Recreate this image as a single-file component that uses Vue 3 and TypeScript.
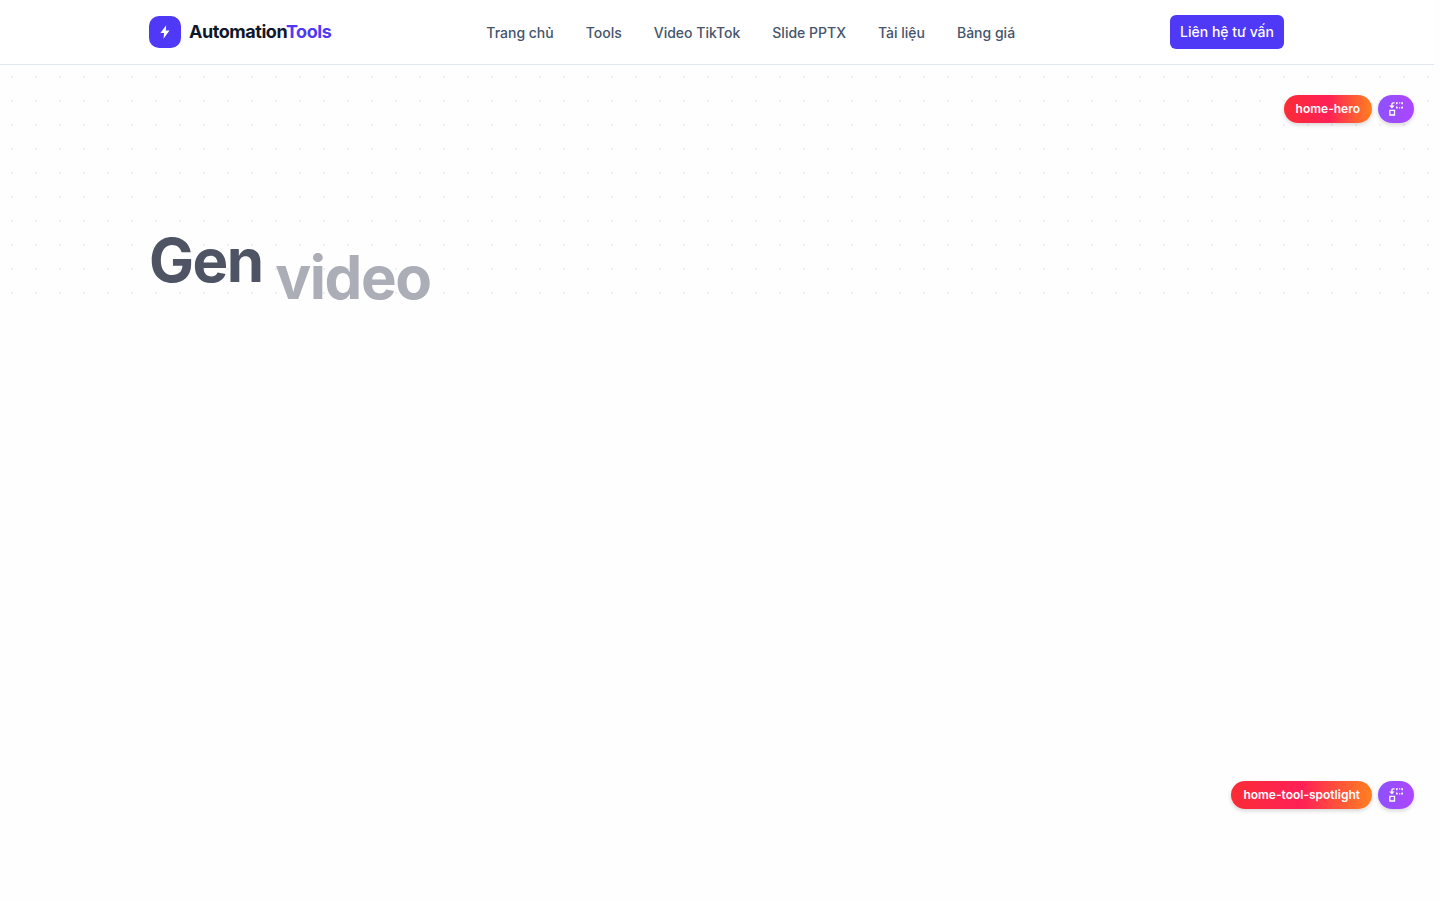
<script setup lang="ts">
interface NavLink {
  label: string
  href: string
}

const links: NavLink[] = [
  { label: 'Trang chủ', href: '#home' },
  { label: 'Tools', href: '#tools' },
  { label: 'Video TikTok', href: '#video' },
  { label: 'Slide PPTX', href: '#slide' },
  { label: 'Tài liệu', href: '#docs' },
  { label: 'Bảng giá', href: '#pricing' },
]

const sections: { id: string; hero: boolean }[] = [
  { id: 'home-hero', hero: true },
  { id: 'home-tool-spotlight', hero: false },
]
</script>

<template>
  <div class="page">
    <header class="header">
      <div class="container bar">
        <a class="brand" href="#home">
          <span class="logo">
            <svg viewBox="0 0 16 16" width="16" height="16" aria-hidden="true">
              <path d="M9.2 1.2 3.4 9.1h3.7L6.5 14.8l6-8.2H8.8z" fill="#fff" />
            </svg>
          </span>
          <span class="brand-name">Automation<span class="accent">Tools</span></span>
        </a>
        <nav class="nav">
          <a v-for="link in links" :key="link.label" :href="link.href">{{ link.label }}</a>
        </nav>
        <button class="cta" type="button">Liên hệ tư vấn</button>
      </div>
    </header>
    <main>
      <section v-for="section in sections" :key="section.id" :class="section.hero ? 'hero' : 'spotlight'">
        <div v-if="section.hero" class="dots"></div>
        <div v-if="section.hero" class="container">
          <h1 class="title"><span class="word">Gen</span> <span class="word entering">video</span></h1>
        </div>
        <div class="tools">
          <button class="tag" type="button">{{ section.id }}</button>
          <button class="swap" type="button" aria-label="Replace section">
            <svg viewBox="0 0 16 16" width="16" height="16" fill="none" stroke="#fff" stroke-width="1.3" aria-hidden="true">
              <path d="M1.9 9.4h4.6v4.6H1.9z" />
              <path d="M6.6 1.9H5.3a1.4 1.4 0 0 0-1.4 1.4v1.6" />
              <path d="M1.2 4.6h5.4L3.9 7.5z" fill="#fff" stroke="none" />
              <path d="M8.7 3.3V1.9h1.1M11 1.9h1.2M13.1 1.9h1.2v1.4M8.7 5.5v1.3h1.1M11 6.8h1.2M13.1 6.8h1.2V5.5" />
            </svg>
          </button>
        </div>
      </section>
    </main>
  </div>
</template>

<style>
body {
  margin: 0;
  background: #fefefe;
}
</style>

<style scoped>
.page {
  min-height: 100vh;
  padding-right: 6px;
  box-sizing: border-box;
  font-family: Inter, "Noto Sans", sans-serif;
  color: #0f172b;
}

.container {
  max-width: 1184px;
  margin: 0 auto;
  padding: 0 25px 0 24px;
  box-sizing: border-box;
}

.header {
  background: #fff;
  border-bottom: 1px solid #e2e8f0;
}

.bar {
  height: 64px;
  display: flex;
  align-items: center;
  justify-content: space-between;
}

.brand {
  display: flex;
  align-items: center;
  gap: 8px;
  color: inherit;
  text-decoration: none;
}

.logo {
  width: 32px;
  height: 32px;
  border-radius: 10px;
  background: #4f39f6;
  display: grid;
  place-items: center;
}

.brand-name {
  font-size: 18px;
  line-height: 28px;
  font-weight: 700;
  letter-spacing: -0.025em;
}

.accent {
  color: #4f39f6;
}

.nav {
  display: flex;
  gap: 32px;
  padding-top: 2px;
}

.nav a {
  color: #45556c;
  font-size: 14px;
  line-height: 20px;
  font-weight: 500;
  text-decoration: none;
}

.cta {
  height: 34px;
  border: 0;
  border-radius: 6px;
  padding: 0 10px;
  background: #4f39f6;
  color: #fff;
  font: 500 14px/20px Inter, "Noto Sans", sans-serif;
}

.hero,
.spotlight {
  position: relative;
}

.hero {
  min-height: 686px;
}

.hero > .container {
  padding-top: 159px;
}

.dots {
  position: absolute;
  inset: 0 -6px auto 0;
  height: 240px;
  background-image: radial-gradient(circle, #efefef 1px, transparent 1px);
  background-size: 24px 24px;
}

.title {
  position: relative;
  margin: 0;
  font-size: 60px;
  line-height: 72px;
  font-weight: 700;
  letter-spacing: -0.025em;
}

.word {
  display: inline-block;
  color: #4f5465;
}

.entering {
  padding-top: 17px;
  vertical-align: top;
  color: #abaeb6;
}

.tools {
  position: absolute;
  top: 30px;
  right: 20px;
  display: flex;
  gap: 6px;
}

.tag,
.swap {
  height: 28px;
  border: 0;
  border-radius: 14px;
  color: #fff;
  box-shadow: 0 2px 4px rgba(0, 0, 0, 0.16);
}

.tag {
  padding: 0 12px;
  font: 600 12px/16px Inter, "Noto Sans", sans-serif;
  background: linear-gradient(90deg, #fb2c36, #ff2056 50%, #ff8020);
}

.swap {
  width: 36px;
  padding: 0;
  display: grid;
  place-items: center;
  background: linear-gradient(90deg, #8e51ff, #ad46ff);
}
</style>
